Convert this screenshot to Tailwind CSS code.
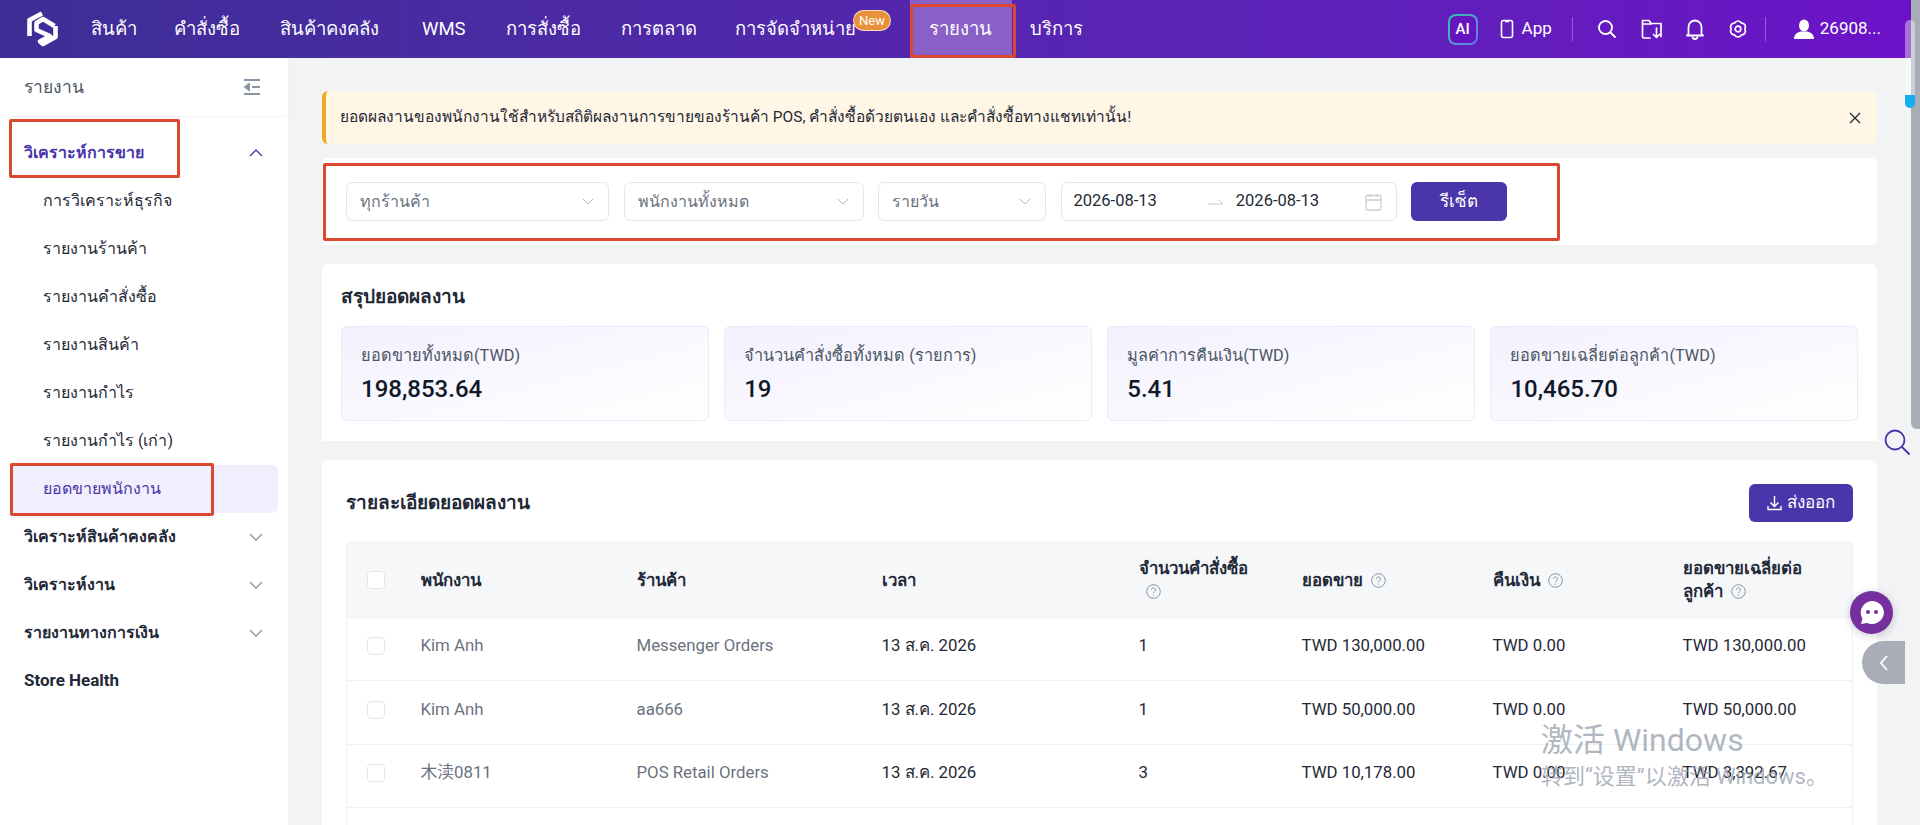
<!DOCTYPE html>
<html lang="th">

<head>
  <meta charset="UTF-8" />
  <meta name="viewport" content="width=device-width, initial-scale=1.0" />
  <title>รายงาน</title>
  <script src="https://cdn.jsdelivr.net/npm/@tailwindcss/browser@4"></script>
</head>

<body class="bg-[#f2f3f5] font-['Roboto','Noto_Sans','Noto_Sans_CJK_SC',sans-serif] text-[16px] text-[#1f2937] overflow-hidden">
  <div class="relative h-[825px] w-[1920px] overflow-hidden">

    <!-- Header -->
    <header class="h-[58px] flex items-center bg-gradient-to-r from-[#3d2e96] to-[#6c12c8] text-white">
      <div class="w-[71px] flex justify-center pl-[15px]">
        <svg width="32" height="36" viewBox="0 0 32 36" fill="none" stroke="#fff" stroke-width="4.6" stroke-linejoin="round">
          <path d="M15 2.5 L2.5 9 V25" />
          <path d="M27.500 15 L16 8 L9.500 12 V19 L23 25 L13 30.500 L16 33 L28.500 26 V15" />
        </svg>
      </div>
      <nav class="flex h-full items-center text-[18.5px] font-medium">
        <a class="w-[83px] pl-5 leading-[58px]">สินค้า</a>
        <a class="w-[106px] pl-5 leading-[58px]">คำสั่งซื้อ</a>
        <a class="w-[142px] pl-5 leading-[58px]">สินค้าคงคลัง</a>
        <a class="w-[84px] pl-5 leading-[58px] font-normal">WMS</a>
        <a class="w-[115px] pl-5 leading-[58px]">การสั่งซื้อ</a>
        <a class="w-[114px] pl-5 leading-[58px]">การตลาด</a>
        <a class="relative w-[195px] pl-5 leading-[58px]">การจัดจำหน่าย
          <span class="absolute left-[138px] top-[10px] h-[21px] w-[38px] rounded-full border border-white/70 bg-[#e8913a] text-center text-[13px] leading-[19px] font-normal">New</span>
        </a>
        <a class="w-[102px] pl-[19px] leading-[58px] bg-[#8a60c6]">รายงาน</a>
        <a class="pl-[18px] leading-[58px]">บริการ</a>
      </nav>
      <div class="ml-auto flex h-full items-center pr-[39px]">
        <div class="w-[30px] h-[31px] rounded-[8px] bg-gradient-to-br from-[#1dc8a0] to-[#6a6cf0] p-[2px]">
          <div class="w-full h-full rounded-[6px] bg-[#6515c0] text-center text-[15px] leading-[27px] font-medium">AI</div>
        </div>
        <svg class="ml-[22px]" width="14" height="20" viewBox="0 0 14 20" fill="none" stroke="#fff" stroke-width="1.6"><rect x="1.5" y="1.5" width="11" height="17" rx="2" /><path d="M5 2.5h4" /></svg>
        <span class="ml-[8px] text-[17px]">App</span>
        <div class="ml-[20px] h-[24px] w-px bg-white/30"></div>
        <svg class="ml-[24px]" width="20" height="20" viewBox="0 0 20 20" fill="none" stroke="#fff" stroke-width="1.8" stroke-linecap="round"><circle cx="8.5" cy="8.5" r="6.5" /><path d="M13.5 13.5 L18 18" /></svg>
        <svg class="ml-[24px]" width="22" height="22" viewBox="0 0 22 22" fill="none" stroke="#fff" stroke-width="1.7" stroke-linecap="round" stroke-linejoin="round"><path d="M9 20H3a1.5 1.5 0 0 1-1.5-1.5V2.5H8l2 3h10v13" /><path d="M2 6h8" /><path d="M15.5 10v9M12.5 16.5l3 3 3-3" /></svg>
        <svg class="ml-[23px]" width="18" height="22" viewBox="0 0 18 22" fill="none" stroke="#fff" stroke-width="1.8" stroke-linejoin="round"><path d="M2.5 16V9a6.5 6.5 0 0 1 13 0v7l1.5 1.5H1z" /><path d="M6.5 18.5a2.5 2.5 0 0 0 5 0" /></svg>
        <svg class="ml-[24px]" width="20" height="20" viewBox="0 0 20 20" fill="none" stroke="#fff" stroke-width="1.7" stroke-linejoin="round"><path d="M16.8 10 A3.8 3.8 0 0 1 13.400 15.890 A3.8 3.8 0 0 1 6.600 15.890 A3.8 3.8 0 0 1 3.200 10 A3.8 3.8 0 0 1 6.600 4.110 A3.8 3.8 0 0 1 13.400 4.110 A3.8 3.8 0 0 1 16.800 10z" /><circle cx="10" cy="10" r="2.800" /></svg>
        <div class="ml-[17px] h-[24px] w-px bg-white/30"></div>
        <svg class="ml-[27px]" width="22" height="20" viewBox="0 0 22 20" fill="#fff"><ellipse cx="11" cy="6.500" rx="5" ry="6" /><path d="M1 20c0-5 4-7 7-7.500h6c3 .5 7 2.500 7 7.500z" /></svg>
        <span class="ml-[5px] text-[17px]">26908...</span>
      </div>
    </header>

    <div class="flex">
      <!-- Sidebar -->
      <aside class="w-[288px] h-[767px] shrink-0 bg-white">
        <div class="h-[58px] flex items-center justify-between pl-[24px] pr-[27px] text-[17.5px] text-[#4b5563] rounded-b-md shadow-[0_1px_2px_rgba(0,0,0,0.06)]">
          <span>รายงาน</span>
          <svg width="18" height="18" viewBox="0 0 18 18" fill="none" stroke="#8a94a6" stroke-width="1.800"><path d="M1 2h16M9 9h8M1 16h16" /><path d="M6 6 L2 9 L6 12z" fill="#8a94a6" /></svg>
        </div>
        <ul class="pt-[13px]">
          <li class="h-[48px] flex items-center justify-between pl-[24px] pr-[25px] font-bold text-[#4a35ab]">วิเคราะห์การขาย
            <svg width="14" height="8" viewBox="0 0 14 8" fill="none" stroke="#4a35ab" stroke-width="1.300"><path d="M1 7l6-6 6 6" /></svg>
          </li>
          <li class="h-[48px] flex items-center pl-[43px]">การวิเคราะห์ธุรกิจ</li>
          <li class="h-[48px] flex items-center pl-[43px]">รายงานร้านค้า</li>
          <li class="h-[48px] flex items-center pl-[43px]">รายงานคำสั่งซื้อ</li>
          <li class="h-[48px] flex items-center pl-[43px]">รายงานสินค้า</li>
          <li class="h-[48px] flex items-center pl-[43px]">รายงานกำไร</li>
          <li class="h-[48px] flex items-center pl-[43px]">รายงานกำไร (เก่า)</li>
          <li class="h-[48px] ml-[10px] mr-[10px] flex items-center pl-[33px] rounded-md bg-[#f1effd] text-[#4a35ab]">ยอดขายพนักงาน</li>
          <li class="h-[48px] flex items-center justify-between pl-[24px] pr-[25px] font-bold">วิเคราะห์สินค้าคงคลัง
            <svg width="14" height="8" viewBox="0 0 14 8" fill="none" stroke="#8a94a6" stroke-width="1.300"><path d="M1 1l6 6 6-6" /></svg>
          </li>
          <li class="h-[48px] flex items-center justify-between pl-[24px] pr-[25px] font-bold">วิเคราะห์งาน
            <svg width="14" height="8" viewBox="0 0 14 8" fill="none" stroke="#8a94a6" stroke-width="1.300"><path d="M1 1l6 6 6-6" /></svg>
          </li>
          <li class="h-[48px] flex items-center justify-between pl-[24px] pr-[25px] font-bold">รายงานทางการเงิน
            <svg width="14" height="8" viewBox="0 0 14 8" fill="none" stroke="#8a94a6" stroke-width="1.300"><path d="M1 1l6 6 6-6" /></svg>
          </li>
          <li class="h-[48px] flex items-center pl-[24px] text-[17px] font-bold">Store Health</li>
        </ul>
      </aside>

      <!-- Main -->
      <main class="w-[1555px] ml-[34px] pt-[33px]">
        <div class="h-[53px] flex items-center justify-between rounded-md border-l-4 border-[#f5a623] bg-[#fff6e5] pl-[14px] pr-[16px] text-[15.5px]">
          <span>ยอดผลงานของพนักงานใช้สำหรับสถิติผลงานการขายของร้านค้า POS, คำสั่งซื้อด้วยตนเอง และคำสั่งซื้อทางแชทเท่านั้น!</span>
          <svg width="12" height="12" viewBox="0 0 12 12" stroke="#1f2937" stroke-width="1.300"><path d="M1 1l10 10M11 1L1 11" /></svg>
        </div>

        <div class="mt-[14px] h-[87px] flex items-center gap-[14.5px] rounded-md bg-white px-[24px]">
          <div class="w-[263px] h-[39px] flex items-center justify-between rounded-md border border-[#e5e7eb] pl-[13px] pr-[14px] text-[#6b7280]">ทุกร้านค้า
            <svg width="12" height="7" viewBox="0 0 12 7" fill="none" stroke="#b4b9c3"><path d="M1 1l5 5 5-5" /></svg>
          </div>
          <div class="w-[240px] h-[39px] flex items-center justify-between rounded-md border border-[#e5e7eb] pl-[13px] pr-[14px] text-[#6b7280]">พนักงานทั้งหมด
            <svg width="12" height="7" viewBox="0 0 12 7" fill="none" stroke="#b4b9c3"><path d="M1 1l5 5 5-5" /></svg>
          </div>
          <div class="w-[168px] h-[39px] flex items-center justify-between rounded-md border border-[#e5e7eb] pl-[13px] pr-[14px] text-[#6b7280]">รายวัน
            <svg width="12" height="7" viewBox="0 0 12 7" fill="none" stroke="#b4b9c3"><path d="M1 1l5 5 5-5" /></svg>
          </div>
          <div class="w-[336px] h-[39px] flex items-center rounded-md border border-[#e5e7eb] pl-[12px] pr-[14px] text-[16.5px]">
            <span>2026-08-13</span>
            <svg class="ml-[51px]" width="16" height="6" viewBox="0 0 16 6" fill="none" stroke="#c4c8d0"><path d="M0 5h15L11 1" /></svg>
            <span class="ml-[12px]">2026-08-13</span>
            <svg class="ml-auto" width="17" height="18" viewBox="0 0 17 18" fill="none" stroke="#c9ced6" stroke-width="1.300"><rect x="1" y="2.500" width="15" height="14.500" rx="1.500" /><path d="M1 7h15M5 1v3M12 1v3" /></svg>
          </div>
          <button class="w-[96px] h-[39px] rounded-md bg-[#4a35ab] text-white text-[17px] font-medium">รีเซ็ต</button>
        </div>

        <section class="mt-[19px] h-[177px] bg-white rounded-t-md px-[19px] pt-[20px]">
          <h2 class="text-[19px] leading-[26px] font-bold">สรุปยอดผลงาน</h2>
          <div class="mt-[16px] grid grid-cols-4 gap-[15.5px]">
            <div class="h-[95px] rounded-md border border-[#ebe9fb] bg-gradient-to-br from-[#f3f1fe] to-white px-[19px] pt-[17px]">
              <p class="text-[16.3px] leading-[24px] text-[#4b5563]">ยอดขายทั้งหมด(TWD)</p>
              <p class="mt-[5px] text-[24px] leading-[32px] font-medium text-[#111827]">198,853.64</p>
            </div>
            <div class="h-[95px] rounded-md border border-[#ebe9fb] bg-gradient-to-br from-[#f3f1fe] to-white px-[19px] pt-[17px]">
              <p class="text-[16.3px] leading-[24px] text-[#4b5563]">จำนวนคำสั่งซื้อทั้งหมด (รายการ)</p>
              <p class="mt-[5px] text-[24px] leading-[32px] font-medium text-[#111827]">19</p>
            </div>
            <div class="h-[95px] rounded-md border border-[#ebe9fb] bg-gradient-to-br from-[#f3f1fe] to-white px-[19px] pt-[17px]">
              <p class="text-[16.3px] leading-[24px] text-[#4b5563]">มูลค่าการคืนเงิน(TWD)</p>
              <p class="mt-[5px] text-[24px] leading-[32px] font-medium text-[#111827]">5.41</p>
            </div>
            <div class="h-[95px] rounded-md border border-[#ebe9fb] bg-gradient-to-br from-[#f3f1fe] to-white px-[19px] pt-[17px]">
              <p class="text-[16.3px] leading-[24px] text-[#4b5563]">ยอดขายเฉลี่ยต่อลูกค้า(TWD)</p>
              <p class="mt-[5px] text-[24px] leading-[32px] font-medium text-[#111827]">10,465.70</p>
            </div>
          </div>
        </section>

        <section class="mt-[19px] h-[380px] bg-white rounded-t-md px-[24px] pt-[24px]">
          <div class="h-[38px] flex items-center justify-between">
            <h2 class="text-[19px] font-bold">รายละเอียดยอดผลงาน</h2>
            <button class="w-[104px] h-[38px] flex items-center justify-center gap-[5px] rounded-md bg-[#4a35ab] text-[17px] text-white">
              <svg width="15" height="16" viewBox="0 0 15 16" fill="none" stroke="#fff" stroke-width="1.400"><path d="M7.500 1v10M3.500 7.500l4 4 4-4M1 11v3.500h13V11" /></svg>
              ส่งออก
            </button>
          </div>
          <table class="mt-[20px] w-full table-fixed border border-[#f0f1f3] text-left text-[16.8px]">
            <colgroup>
              <col class="w-[74px]" />
              <col class="w-[216px]" />
              <col class="w-[245px]" />
              <col class="w-[257px]" />
              <col class="w-[163px]" />
              <col class="w-[191px]" />
              <col class="w-[190px]" />
              <col />
            </colgroup>
            <thead class="bg-[#f6f7f9]">
              <tr class="h-[75px] border-b border-[#f0f1f3] font-bold leading-[23px]">
                <th class="pl-[20px]"><div class="w-[18px] h-[18px] rounded-[4px] border border-[#e5e7eb] bg-white"></div></th>
                <th>พนักงาน</th>
                <th>ร้านค้า</th>
                <th>เวลา</th>
                <th class="pr-[30px]">จำนวนคำสั่งซื้อ
                  <svg class="inline ml-[7px] align-[-2px]" width="15" height="15" viewBox="0 0 15 15" fill="none" stroke="#8a94a6"><circle cx="7.500" cy="7.500" r="6.800" /><path d="M5.500 5.800a2 2 0 1 1 3 1.800c-.7.400-1 .8-1 1.600M7.500 10.500v1.200" /></svg>
                </th>
                <th>ยอดขาย
                  <svg class="inline ml-[4px] align-[-2px]" width="15" height="15" viewBox="0 0 15 15" fill="none" stroke="#8a94a6"><circle cx="7.500" cy="7.500" r="6.800" /><path d="M5.500 5.800a2 2 0 1 1 3 1.800c-.7.400-1 .8-1 1.600M7.500 10.500v1.200" /></svg>
                </th>
                <th>คืนเงิน
                  <svg class="inline ml-[4px] align-[-2px]" width="15" height="15" viewBox="0 0 15 15" fill="none" stroke="#8a94a6"><circle cx="7.500" cy="7.500" r="6.800" /><path d="M5.500 5.800a2 2 0 1 1 3 1.800c-.7.400-1 .8-1 1.600M7.500 10.500v1.200" /></svg>
                </th>
                <th class="pr-[20px]">ยอดขายเฉลี่ยต่อ<br />ลูกค้า
                  <svg class="inline ml-[4px] align-[-2px]" width="15" height="15" viewBox="0 0 15 15" fill="none" stroke="#8a94a6"><circle cx="7.500" cy="7.500" r="6.800" /><path d="M5.500 5.800a2 2 0 1 1 3 1.800c-.7.400-1 .8-1 1.600M7.500 10.500v1.200" /></svg>
                </th>
              </tr>
            </thead>
            <tbody class="[&_td]:pb-[6px]">
              <tr class="h-[63px] border-b border-[#f0f1f3]">
                <td class="pl-[20px]"><div class="w-[18px] h-[18px] rounded-[4px] border border-[#e5e7eb]"></div></td>
                <td class="text-[#6b7280]">Kim Anh</td>
                <td class="text-[#6b7280]">Messenger Orders</td>
                <td>13 ส.ค. 2026</td>
                <td>1</td>
                <td>TWD 130,000.00</td>
                <td>TWD 0.00</td>
                <td>TWD 130,000.00</td>
              </tr>
              <tr class="h-[64px] border-b border-[#f0f1f3]">
                <td class="pl-[20px]"><div class="w-[18px] h-[18px] rounded-[4px] border border-[#e5e7eb]"></div></td>
                <td class="text-[#6b7280]">Kim Anh</td>
                <td class="text-[#6b7280]">aa666</td>
                <td>13 ส.ค. 2026</td>
                <td>1</td>
                <td>TWD 50,000.00</td>
                <td>TWD 0.00</td>
                <td>TWD 50,000.00</td>
              </tr>
              <tr class="h-[63px] border-b border-[#f0f1f3]">
                <td class="pl-[20px]"><div class="w-[18px] h-[18px] rounded-[4px] border border-[#e5e7eb]"></div></td>
                <td class="text-[#6b7280]">木渎0811</td>
                <td class="text-[#6b7280]">POS Retail Orders</td>
                <td>13 ส.ค. 2026</td>
                <td>3</td>
                <td>TWD 10,178.00</td>
                <td>TWD 0.00</td>
                <td>TWD 3,392.67</td>
              </tr>
              <tr class="h-[18px]"><td colspan="8"></td></tr>
            </tbody>
          </table>
        </section>
      </main>
    </div>

    <!-- Red annotation boxes -->
    <div class="absolute left-[910px] top-[4px] w-[106px] h-[54px] border-[3px] border-[#d9482f] rounded-[2px]"></div>
    <div class="absolute left-[9px] top-[119px] w-[171px] h-[59px] border-[3px] border-[#d9482f] rounded-[2px]"></div>
    <div class="absolute left-[10px] top-[463px] w-[204px] h-[53px] border-[3px] border-[#d9482f] rounded-[2px]"></div>
    <div class="absolute left-[323px] top-[163px] w-[1237px] h-[78px] border-[3px] border-[#d9482f] rounded-[2px]"></div>

    <!-- Page scrollbar and floating tools -->
    <div class="absolute right-0 top-0 w-[9px] h-[429px] rounded-bl-md bg-[#a9adb8]"></div>
    <div class="absolute left-[1905px] top-[20px] w-[10px] h-[75px] rounded-t-full bg-white/40"></div>
    <div class="absolute left-[1905px] top-[95px] w-[10px] h-[13px] rounded-b-full bg-[#14aef0]"></div>

    <svg class="absolute left-[1884px] top-[429px]" width="26" height="26" viewBox="0 0 26 26" fill="none" stroke="#4a35ab" stroke-width="1.800" stroke-linecap="round"><circle cx="11" cy="11" r="9.500" /><path d="M18 18l7 7" /></svg>
    <div class="absolute left-[1850px] top-[591px] w-[43px] h-[43px] flex items-center justify-center rounded-full bg-[#762f9e] shadow-[0_2px_8px_rgba(0,0,0,0.2)]">
      <svg width="26" height="25" viewBox="0 0 26 25"><path d="M13 1a12 11.500 0 1 1-5 22l-6 1 1.500-5.500A12 11.500 0 0 1 13 1z" fill="#fff" /><circle cx="9" cy="12" r="2" fill="#762f9e" /><circle cx="17" cy="12" r="2" fill="#762f9e" /></svg>
    </div>
    <div class="absolute left-[1862px] top-[641px] w-[43px] h-[43px] flex items-center justify-center rounded-l-full bg-[#a9adb8]">
      <svg width="10" height="16" viewBox="0 0 10 16" fill="none" stroke="#fff" stroke-width="1.800"><path d="M8 1L2 8l6 7" /></svg>
    </div>

    <!-- Windows activation watermark -->
    <div class="absolute left-[1541px] top-[720px] text-[32px] leading-[40px] text-[#9ca3af]/80 pointer-events-none">激活 Windows</div>
    <div class="absolute left-[1541px] top-[762px] text-[22px] leading-[30px] text-[#9ca3af]/80 pointer-events-none">转到“设置”以激活 Windows。</div>
  </div>
</body>

</html>
